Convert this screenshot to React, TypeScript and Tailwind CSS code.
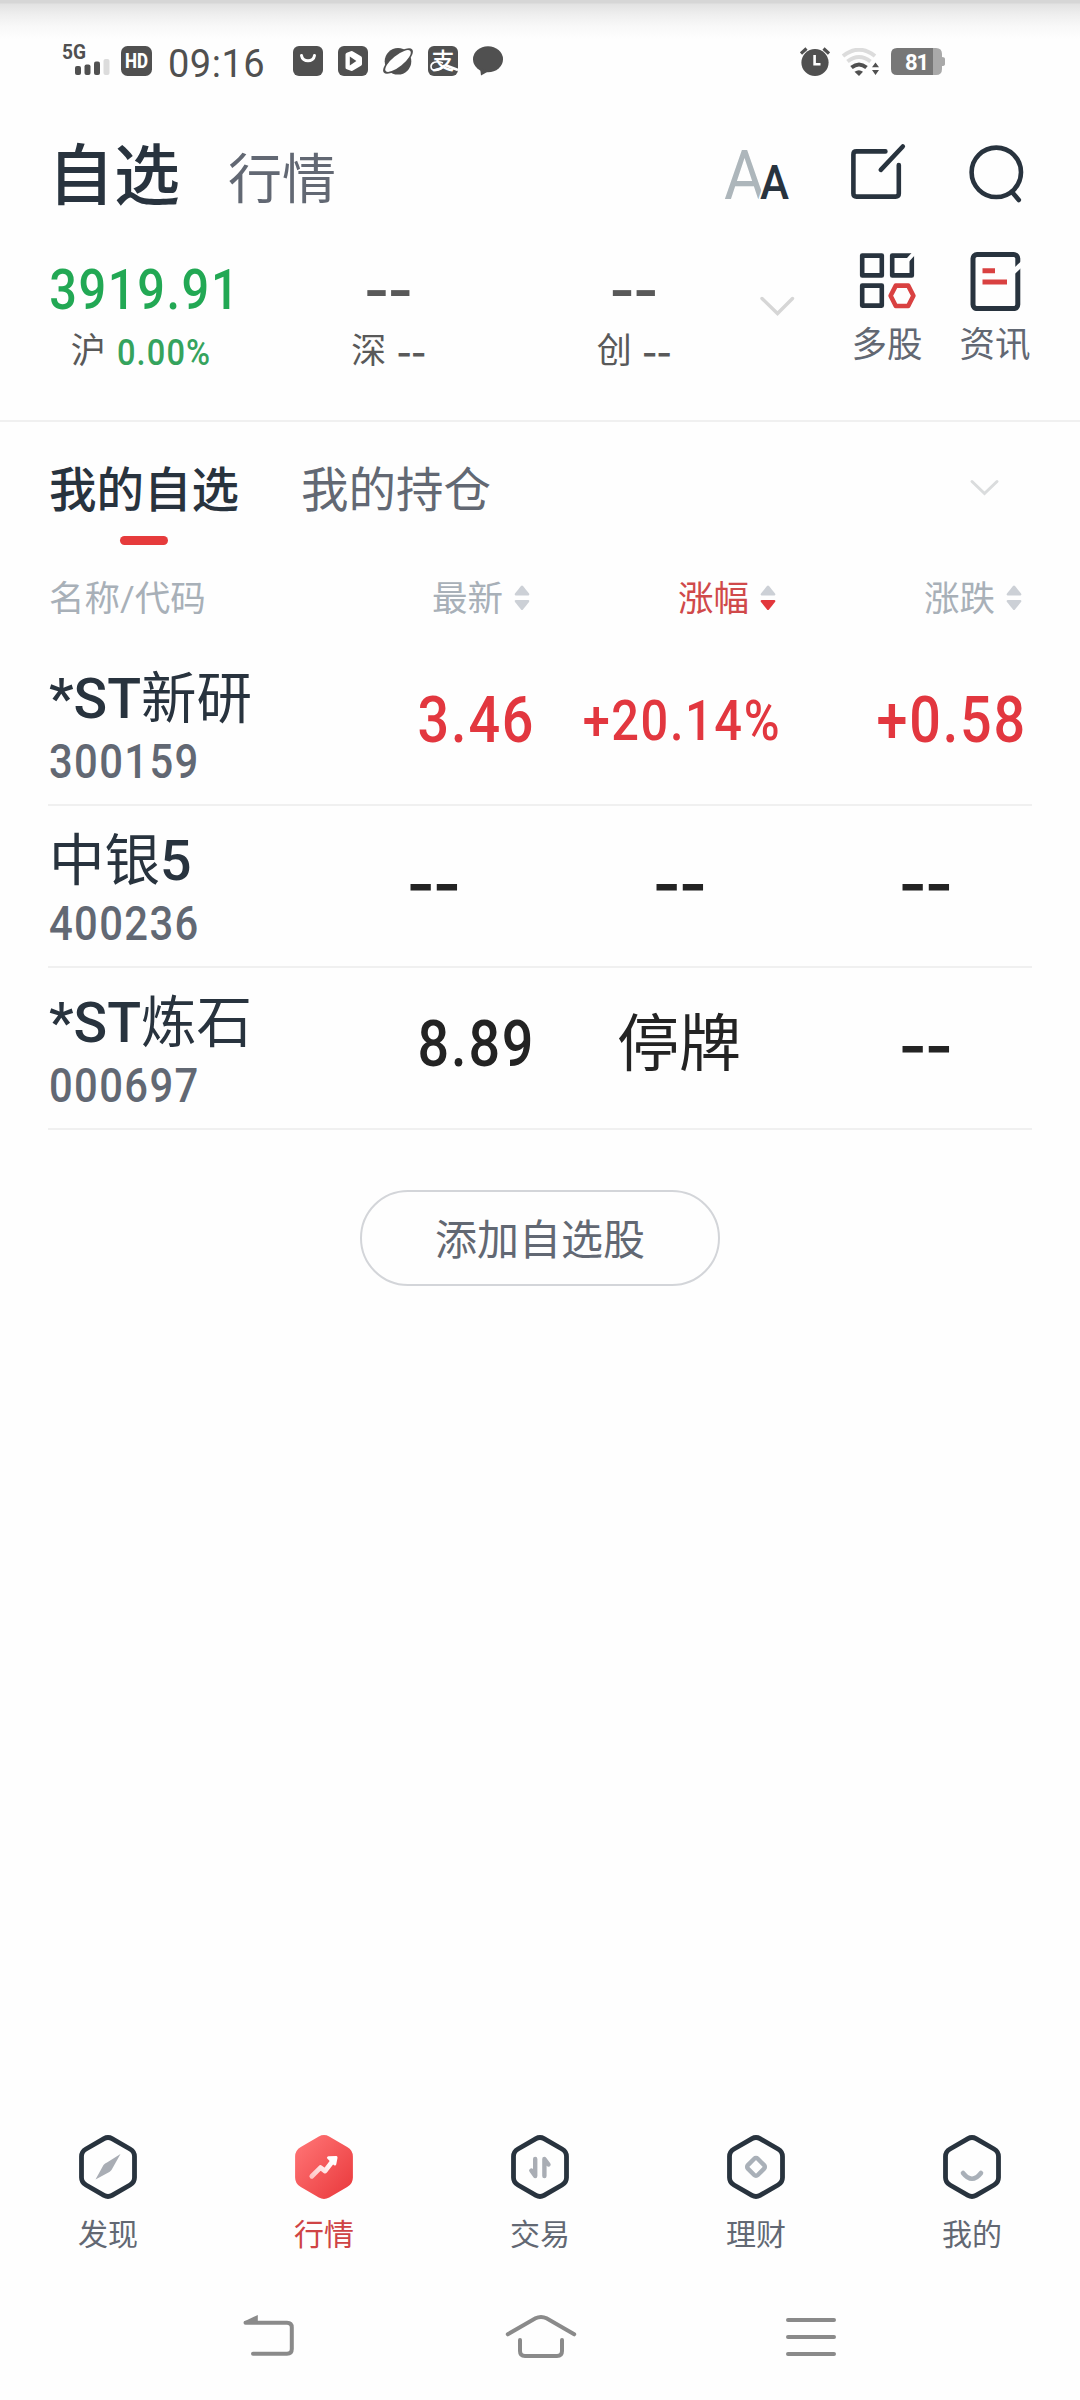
import clsx from 'clsx';
import React from 'react';

type Trend = 'up' | 'down' | 'flat';

interface Stock {
  name: string;
  code: string;
  price: string;
  percent: string;
  change: string;
  trend: Trend;
}

const stocks: Stock[] = [
  { name: '*ST新研', code: '300159', price: '3.46', percent: '+20.14%', change: '+0.58', trend: 'up' },
  { name: '中银5', code: '400236', price: '--', percent: '--', change: '--', trend: 'flat' },
  { name: '*ST炼石', code: '000697', price: '8.89', percent: '停牌', change: '--', trend: 'flat' },
];

const indices = [
  { label: '沪', value: '3919.91', percent: '0.00%' },
  { label: '深', value: '--', percent: '--' },
  { label: '创', value: '--', percent: '--' },
];

const HEX =
  'M25 3.6 Q29 1.4 33 3.6 L51 14 Q55.5 16.6 55.5 21.5 V42.5 Q55.5 47.4 51 50 L33 60.4 Q29 62.6 25 60.4 L7 50 Q2.5 47.4 2.5 42.5 V21.5 Q2.5 16.6 7 14 Z';

const StatusBar: React.FC = () => (
  <div className="flex h-[120px] items-start bg-[linear-gradient(to_bottom,#d6d6d6_0px,#d6d6d6_3px,#e2e2e2_4px,#efefef_15px,#f8f8f8_26px,#fefefe_39px)] pt-[44px] pl-[62px] text-[#505050]">
    <svg className="overflow-visible" width="49" height="34" viewBox="0 0 49 34" fill="currentColor">
      <text x="0" y="15" fontSize="20" fontWeight="700" fontFamily="Roboto" textLength="24" lengthAdjust="spacingAndGlyphs">
        5G
      </text>
      <rect x="13" y="22" width="6" height="9" rx="2" />
      <rect x="22.5" y="20.5" width="6" height="10.5" rx="2" />
      <rect x="32" y="17.5" width="6" height="13.5" rx="2" />
      <rect x="41.5" y="15" width="6" height="16" rx="2" fill="#dcdcdc" />
    </svg>
    <svg className="mt-0.5 ml-2.5" width="31" height="30" viewBox="0 0 31 30">
      <rect width="31" height="30" rx="6.5" fill="currentColor" />
      <text x="4" y="22" fontSize="19.5" fontWeight="800" fontFamily="Roboto" fill="#fff" textLength="23" lengthAdjust="spacingAndGlyphs">
        HD
      </text>
    </svg>
    <span className="ml-[16px] w-[125px] text-[38px] leading-[40px] tracking-[0.5px]">09:16</span>
    <div className="mt-0.5 flex gap-[15px]">
      <svg width="30" height="30" viewBox="0 0 30 30">
        <rect width="30" height="30" rx="6" fill="currentColor" />
        <path d="M8.5 9.5 C9.5 16.5 20.5 16.5 21.5 9.5" fill="none" stroke="#fff" strokeWidth="3" strokeLinecap="round" />
      </svg>
      <svg width="30" height="30" viewBox="0 0 30 30">
        <rect width="30" height="30" rx="6" fill="currentColor" />
        <path d="M9.5 8.5 L13.5 7 L22 12 V18 L13.5 23 L9.5 21.5 Z" fill="#fff" stroke="#fff" strokeWidth="4" strokeLinejoin="round" />
        <path d="M11.8 10.5 L18.4 15 L11.8 19.5 Z" fill="currentColor" />
      </svg>
      <svg width="30" height="30" viewBox="0 0 30 30">
        <circle cx="15" cy="15.3" r="13.3" fill="currentColor" />
        <g transform="rotate(-39 15 15)">
          <ellipse cx="15" cy="15" rx="18.3" ry="7" fill="currentColor" />
          <ellipse cx="15" cy="15" rx="15.8" ry="5.6" fill="#fefefe" />
        </g>
      </svg>
      <svg className="overflow-visible" width="30" height="30" viewBox="0 0 30 30">
        <rect width="30" height="30" rx="6" fill="currentColor" />
        <text x="3.5" y="22.5" fontSize="23" fontWeight="500" fontFamily="Noto Sans CJK SC" fill="#fff">
          支
        </text>
        <path d="M15 17 C8 14 3 17 3 20.5 C3 26 12 26 16.5 19" fill="none" stroke="#fff" strokeWidth="1.6" />
        <path d="M17 19 L30 24" stroke="#fff" strokeWidth="2.6" />
      </svg>
      <svg width="30" height="30" viewBox="0 0 30 30" fill="currentColor">
        <ellipse cx="15" cy="13.2" rx="15" ry="13" />
        <path d="M7 22 L8 29.5 L16 25 Z" />
      </svg>
    </div>
    <svg className="mt-[3px] ml-[297px]" width="30" height="30" viewBox="0 0 30 30">
      <circle cx="15" cy="15.5" r="13.6" fill="currentColor" />
      <path d="M1 6.5 L6.5 1.5 M29 6.5 L23.5 1.5" stroke="currentColor" strokeWidth="3.2" />
      <path d="M14.6 8 V17.3 H20.5" fill="none" stroke="#fff" strokeWidth="2.6" />
    </svg>
    <svg className="mt-1 ml-[11px]" width="38" height="29" viewBox="0 0 38 29" fill="none">
      <path d="M2 8 Q18 -4.5 34 8" stroke="#dcdcdc" strokeWidth="4" />
      <path d="M6.5 13.5 Q18 4.5 29.5 13.5" stroke="#dcdcdc" strokeWidth="4" />
      <path d="M10.5 19.5 Q18 13.5 25.5 19.5" stroke="currentColor" strokeWidth="4" />
      <path d="M13.5 23.8 Q18 20.5 22 23.8 L18 28 Z" fill="currentColor" />
      <path d="M31 19.3 L34.5 14.5 L38 19.3 Z M31 22 L34.5 27 L38 22 Z" fill="currentColor" />
    </svg>
    <svg className="mt-1 ml-3" width="54" height="27" viewBox="0 0 54 27">
      <path d="M42 0 H45 Q51 0 51 6 V9 Q54 9 54 11 V16 Q54 18 51 18 V21 Q51 27 45 27 H42 Z" fill="#a9a9a9" />
      <path d="M42 0 H6 Q0 0 0 6 V21 Q0 27 6 27 H42 Z" fill="#777" />
      <text x="14" y="21.5" fontSize="22" fontWeight="700" fontFamily="Roboto" fill="#fff" textLength="24">
        81
      </text>
    </svg>
  </div>
);

const PageHeader: React.FC = () => (
  <div className="flex h-[126px] items-start pl-12">
    <h1 className="mt-[9px] text-[66px] leading-[96px] font-medium text-[#28333e]">自选</h1>
    <span className="mt-[21px] ml-12 text-[54px] leading-[80px] text-[#626873]">行情</span>
    {/* font size switch */}
    <div className="mt-[25px] ml-[388px] flex items-end">
      <svg className="overflow-visible" width="36" height="58" viewBox="0 0 36 58">
        <text x="0" y="54" fontSize="69" fontWeight="400" fontFamily="Roboto" fill="#adb6bb" textLength="41" lengthAdjust="spacingAndGlyphs">
          A
        </text>
      </svg>
      <svg className="overflow-visible" width="31" height="58" viewBox="0 0 31 58">
        <text x="0" y="54" fontSize="48" fontWeight="500" fontFamily="Roboto" fill="#28333e" stroke="#fefefe" strokeWidth="4" paintOrder="stroke" textLength="29" lengthAdjust="spacingAndGlyphs">
          A
        </text>
      </svg>
    </div>
    <svg className="mt-[23px] ml-[57px]" width="60" height="60" viewBox="848 143 60 60" fill="none" stroke="#28333e" strokeWidth="4.6" strokeLinecap="round" strokeLinejoin="round">
      <path d="M885.4 151.4 H856.5 Q853.4 151.4 853.4 154.5 V193.5 Q853.4 196.6 856.5 196.6 H895.6 Q898.8 196.6 898.8 193.5 V165" />
      <path d="M902.8 146.5 L880.8 169.8" />
    </svg>
    <svg className="mt-[23px] ml-[59px]" width="60" height="60" viewBox="967 143 60 60" fill="none" stroke="#28333e" strokeWidth="4.6" strokeLinecap="round">
      <circle cx="996.3" cy="172.3" r="24.7" />
      <path d="M1011.8 191.7 L1018.8 200" />
    </svg>
  </div>
);

const Dashes: React.FC<{ className?: string }> = ({ className }) => (
  <span className={clsx("font-['Inter'] font-semibold tracking-[-0.04em]", className)}>--</span>
);

// Narrow figures: squeezed horizontally, with a little tracking put back
const Figures: React.FC<{ value: string; className?: string }> = ({ value, className }) => (
  <span className={clsx('inline-block scale-x-[.87] tracking-[0.033em] whitespace-nowrap', className)}>{value}</span>
);

const IndexBar: React.FC = () => (
  <div className="flex h-[176px] items-start border-b-2 border-[#f0f0f0] pl-5">
    {indices.map((i) => (
      <div key={i.label} className="flex w-[245.5px] flex-col items-center text-[#595959]">
        <div className="flex h-[87px] items-center text-[56px] font-medium">
          {i.value === '--' ? <Dashes className="pr-0.5" /> : <Figures value={i.value} className="ml-1 text-[#22a854]" />}
        </div>
        <div className="flex h-[38px] items-center gap-2.5 text-[35px]">
          <span>{i.label}</span>
          {i.percent === '--' ? (
            <Dashes className="text-[34px]" />
          ) : (
            <Figures value={i.percent} className="-mr-2.5 ml-px origin-left text-[37.5px] font-medium text-[#35a35d]" />
          )}
        </div>
      </div>
    ))}
    <svg className="mt-[49px] ml-[2px]" width="36" height="22" viewBox="0 0 36 22" fill="none" stroke="#d6d6d6" strokeWidth="3.4" strokeLinecap="round">
      <path d="M3 3.5 L18.5 18.5 L33.5 3.5" />
    </svg>
    <div className="mt-[5px] ml-[57px] flex flex-col items-center text-[35.5px] leading-[50px] text-[#626873]">
      <svg width="60" height="60" viewBox="857 251 60 60" fill="none" stroke="#28333e" strokeWidth="4.6" strokeLinejoin="round">
        <rect x="862.2" y="255.6" width="19.6" height="19.8" />
        <rect x="892.2" y="255.6" width="19.6" height="19.8" />
        <rect x="862.2" y="285.6" width="19.6" height="20" />
        <path d="M895.8 285.6 H908.2 L913.4 295.8 L908.2 306 H895.8 L890.6 295.8 Z" stroke="#d94141" />
        <path d="M906 262 L917 250" stroke="#fefefe" strokeWidth="4" />
      </svg>
      <span className="mt-[9px]">多股</span>
    </div>
    <div className="mt-[5px] ml-[37px] flex flex-col items-center text-[35.5px] leading-[50px] text-[#626873]">
      <svg width="60" height="60" viewBox="966 251 60 60" fill="none" stroke="#28333e" strokeWidth="5">
        <rect x="974" y="254.6" width="44.8" height="54" rx="4" />
        <path d="M1012 274 L1025 262" stroke="#fefefe" />
        <path d="M983.5 270.8 H996 M983.5 282 H1008" stroke="#d94141" />
      </svg>
      <span className="mt-[9px]">资讯</span>
    </div>
  </div>
);

const GroupTabs: React.FC = () => (
  <div className="flex h-[134px] items-start pt-[34px] pl-[49px] text-[47.5px] leading-[70px]">
    <div className="flex flex-col items-center">
      <span className="font-medium text-[#28333e]">我的自选</span>
      <span className="mt-2.5 h-[9px] w-12 rounded-full bg-[#e63b3c]" />
    </div>
    <span className="ml-[62px] text-[#626873]">我的持仓</span>
    <svg className="mt-[22px] ml-[478px]" width="32" height="20" viewBox="0 0 32 20" fill="none" stroke="#dadcdd" strokeWidth="3" strokeLinecap="round">
      <path d="M3 3.5 L15.5 15.5 L28 3.5" />
    </svg>
  </div>
);

const SortLabel: React.FC<{ label: string; active?: boolean }> = ({ label, active = false }) => (
  <div className={clsx('flex w-[246px] items-center justify-end gap-[11px]', active && 'text-[#d0494a]')}>
    <span className="pt-1">{label}</span>
    <svg width="16" height="28" viewBox="0 0 16 28" stroke="none">
      <path d="M1.5 11.5 Q0 11 1 9.5 L7 2 Q8 1 9 2 L15 9.5 Q16 11 14.5 11.5 Z" fill="#ccd0d6" />
      <path d="M1.5 16 Q0 16.5 1 18 L7 25.5 Q8 26.5 9 25.5 L15 18 Q16 16.5 14.5 16 Z" fill={active ? '#e2373c' : '#ccd0d6'} />
    </svg>
  </div>
);

const Quote: React.FC<{ value: string; small?: boolean }> = ({ value, small = false }) => {
  if (value === '--') {
    return <Dashes className="w-[246px] pt-0.5 pr-[71px] text-right text-[62px]" />;
  }
  if (value === '停牌') {
    return <span className="w-[246px] pr-[35px] text-right text-[62px]">{value}</span>;
  }
  return (
    <div className="flex w-[246px] justify-end">
      <Figures value={value} className={clsx('-mr-[5px] origin-right font-medium', small ? 'text-[56px]' : 'text-[64px]')} />
    </div>
  );
};

// Latin letters and digits in a stock name are a step heavier than the hanzi
const StockName: React.FC<{ name: string }> = ({ name }) => (
  <span className="text-[55.5px] leading-[66px] whitespace-nowrap text-[#28333e]">
    {name.split(/([*A-Z0-9]+)/).map((part, idx) => (
      <span key={idx} className={clsx(/^[*A-Z0-9]/.test(part) && 'font-medium')}>
        {part}
      </span>
    ))}
  </span>
);

const StockRow: React.FC<{ stock: Stock }> = ({ stock }) => (
  <div className="flex h-[162px] items-center border-b-2 border-[#f0f0f0]">
    <div className="flex w-[236px] flex-col items-start pt-[9px] pl-px">
      <StockName name={stock.name} />
      <Figures value={stock.code} className="origin-left text-[48px] leading-[58px] font-medium text-[#626873]" />
    </div>
    <div className={clsx('flex items-center pb-1.5 leading-[80px]', stock.trend === 'up' ? 'text-[#e2373f]' : 'text-[#232323]')}>
      <Quote value={stock.price} />
      <Quote value={stock.percent} small />
      <Quote value={stock.change} />
    </div>
  </div>
);

const tabs: { label: string; active?: boolean; icon: React.ReactNode }[] = [
  { label: '发现', icon: <path d="M41.5 19 L32.5 35 Q31 37 28.5 38 L16.5 44.5 L24.5 30 Q26 28 28 27.5 Z" fill="#a9adb4" /> },
  {
    label: '行情',
    active: true,
    icon: (
      <g stroke="url(#arrow)" strokeLinecap="round" strokeLinejoin="round" fill="none">
        <path d="M16.8 41.3 L25.5 32.6 L30 36 L38.5 25" strokeWidth="4.8" />
        <path d="M33.5 22.8 L41 22.6 L39.8 29 Z" fill="#fff" strokeWidth="3" />
      </g>
    ),
  },
  {
    label: '交易',
    icon: (
      <path d="M24.2 24 V41 L20.3 35.5 M33.4 41 V24 L37.5 29.5" fill="none" stroke="#a9adb4" strokeWidth="4.4" strokeLinecap="round" strokeLinejoin="round" />
    ),
  },
  {
    label: '理财',
    icon: <rect x="22" y="24.9" width="14" height="14" rx="2.5" transform="rotate(45 29 31.9)" fill="none" stroke="#a9b0b8" strokeWidth="4.4" />,
  },
  { label: '我的', icon: <path d="M20 38 Q29 49.5 38 38" fill="none" stroke="#a9b0b8" strokeWidth="4.6" strokeLinecap="round" /> },
];

const BottomTabs: React.FC = () => (
  <div className="flex h-[150px] items-start">
    {tabs.map((t) => (
      <div key={t.label} className="flex w-[216px] flex-col items-center">
        <svg width="58" height="64" viewBox="0 0 58 64">
          <defs>
            <linearGradient id="hex" x1="0" y1="0" x2="1" y2="1">
              <stop offset="0.1" stopColor="#fd6f70" />
              <stop offset="1" stopColor="#ea3a3d" />
            </linearGradient>
            <linearGradient id="arrow" gradientUnits="userSpaceOnUse" x1="16" y1="42" x2="42" y2="22">
              <stop offset="0" stopColor="#ffc4c4" />
              <stop offset="0.8" stopColor="#fff" />
            </linearGradient>
          </defs>
          <path d={HEX} fill={t.active ? 'url(#hex)' : 'none'} stroke={t.active ? 'url(#hex)' : '#28333e'} strokeWidth="4.8" />
          {t.icon}
        </svg>
        <span className={clsx('mt-3.5 text-[30px] leading-[44px]', t.active ? 'text-[#cf4445]' : 'text-[#626873]')}>{t.label}</span>
      </div>
    ))}
  </div>
);

const SystemNav: React.FC = () => (
  <div className="flex h-[115px] items-start pt-[27px] pl-[238px]">
    <svg width="60" height="50" viewBox="238 2312 60 50" fill="none" stroke="#8a8a8a" strokeWidth="4" strokeLinecap="round">
      <path d="M245.5 2322.7 H287 Q291.8 2322.7 291.8 2327.5 V2349 Q291.8 2353.8 287 2353.8 H253" />
      <path d="M244 2321.5 L257.8 2315 V2324 H246 Z" fill="#8a8a8a" stroke="none" />
    </svg>
    <svg className="ml-[205px]" width="76" height="50" viewBox="503 2312 76 50" fill="none" stroke="#8a8a8a" strokeWidth="4" strokeLinecap="round">
      <path d="M507.8 2334.3 L535.5 2318.3 Q541 2315.5 546.5 2318.3 L574.2 2334.3" />
      <path d="M520 2340 V2351 Q520 2356 525 2356 H557 Q562 2356 562 2351 V2340" />
    </svg>
    <svg className="ml-[202px]" width="60" height="50" viewBox="781 2312 60 50" fill="none" stroke="#8a8a8a" strokeWidth="4" strokeLinecap="round">
      <path d="M788 2320 H834 M788 2337 H834 M788 2354 H834" />
    </svg>
  </div>
);

const App: React.FC = () => (
  <div className="flex h-[2400px] w-[1080px] flex-col overflow-hidden bg-[#fefefe] font-['Roboto','Noto_Sans_CJK_SC',sans-serif]">
    <StatusBar />
    <PageHeader />
    <IndexBar />
    <GroupTabs />
    <div className="px-12">
      <div className="flex h-[88px] items-center pb-[4px] text-[35.5px] text-[#a8b0b8]">
        <span className="w-[236px] pt-1 pl-px">名称/代码</span>
        <SortLabel label="最新" />
        <SortLabel label="涨幅" active />
        <SortLabel label="涨跌" />
      </div>
      {stocks.map((s) => (
        <StockRow key={s.code} stock={s} />
      ))}
    </div>
    <button className="mt-[60px] h-[96px] w-[360px] self-center rounded-full border-2 border-[#d3d5d9] pt-1 text-[42px] text-[#626873]">
      添加自选股
    </button>
    <div className="mt-auto">
      <BottomTabs />
      <SystemNav />
    </div>
  </div>
);

export default App;
